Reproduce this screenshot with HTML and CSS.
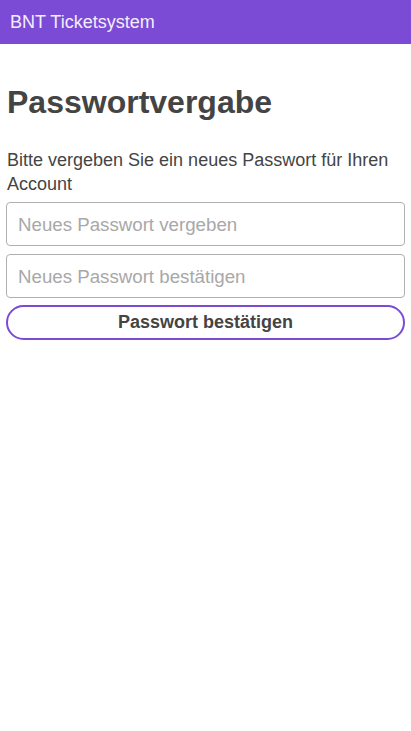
FILE: index.html
```html
<!DOCTYPE html>
<html lang="de">
<head>
<meta charset="utf-8">
<title>BNT Ticketsystem</title>
<link rel="stylesheet" href="styles.css">
</head>
<body>
<header class="topbar">BNT Ticketsystem</header>
<main class="content">
  <h1 class="title">Passwortvergabe</h1>
  <p class="intro">Bitte vergeben Sie ein neues Passwort für Ihren Account</p>
  <form class="form">
    <input class="field" type="password" placeholder="Neues Passwort vergeben">
    <input class="field" type="password" placeholder="Neues Passwort bestätigen">
    <button class="submit" type="button">Passwort bestätigen</button>
  </form>
</main>
</body>
</html>
```
FILE: styles.css
```css
html, body {
  margin: 0;
  padding: 0;
  background: #ffffff;
  font-family: "Liberation Sans", Arial, sans-serif;
}
.topbar {
  height: 44px;
  background: #7b4bd6;
  color: #f3eefc;
  font-size: 18px;
  line-height: 44px;
  padding-left: 10px;
}
.content {
  padding: 0 6px;
}
.title {
  margin: 38px 0 0 1px;
  font-size: 32px;
  font-weight: 700;
  color: #444444;
  line-height: 40px;
}
.intro {
  margin: 26px 0 0 1px;
  font-size: 18px;
  line-height: 24px;
  color: #444444;
}
.form {
  margin-top: 6px;
  display: flex;
  flex-direction: column;
  gap: 8px;
}
.field {
  box-sizing: border-box;
  height: 44px;
  width: 100%;
  border: 1px solid #b0b0b0;
  border-radius: 4px;
  padding: 1px 11px 0;
  font-family: inherit;
  font-size: 18.7px;
  color: #444;
  outline: none;
}
.field::placeholder {
  color: #a8a8a8;
}
.submit {
  box-sizing: border-box;
  height: 35px;
  width: 100%;
  border: 2px solid #7b4bd6;
  border-radius: 18px;
  background: #ffffff;
  font-family: inherit;
  font-size: 18px;
  font-weight: 700;
  color: #444444;
  margin-top: -1px;
}
```
